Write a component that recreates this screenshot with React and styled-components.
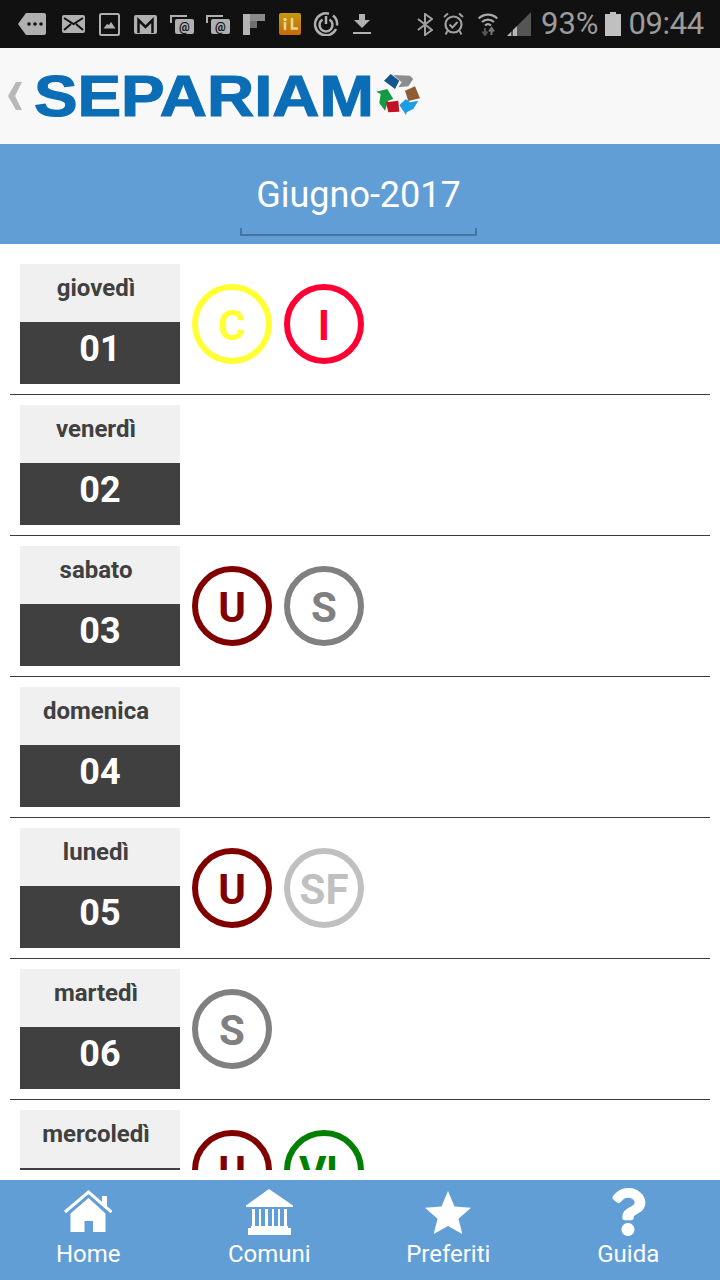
import React from "react";
import styled, { createGlobalStyle } from "styled-components";
import { FaQuestion } from "react-icons/fa";

const Global = createGlobalStyle`
  html, body { margin: 0; padding: 0; background: #fff; }
  body { font-family: Roboto, "Liberation Sans", sans-serif; }
`;

const Page = styled.div`
  width: 720px;
  height: 1280px;
  display: flex;
  flex-direction: column;
  overflow: hidden;
  background: #fff;
`;

const StatusBar = styled.div`
  height: 48px;
  flex: none;
  background: #111;
  display: flex;
  align-items: center;
  color: #9c9c9c;
  font-size: 31px;
  padding-left: 18px;
`;

const StatusIcon = styled.svg`
  flex: none;
  display: block;
  margin-left: ${(p) => p.$ml || 0}px;
`;

const StatusText = styled.span`
  margin-left: ${(p) => p.$ml}px;
  line-height: 48px;
  letter-spacing: ${(p) => p.$ls || 0}px;
`;

const Header = styled.header`
  height: 96px;
  flex: none;
  background: #f8f8f8;
  display: flex;
  align-items: center;
  padding-left: 8px;
`;

const Back = styled.svg`
  flex: none;
  display: block;
`;

const LogoText = styled.span`
  display: block;
  width: 342px;
  flex: none;
  margin-left: 11px;
  font-family: "Liberation Sans", Arial, sans-serif;
  font-weight: 700;
  font-size: 58px;
  line-height: 96px;
  color: #0b6db6;
  -webkit-text-stroke: 1.2px #0b6db6;
  white-space: nowrap;
  transform: scaleX(1.126);
  transform-origin: left center;
`;

const LogoMark = styled.svg`
  flex: none;
  display: block;
`;

const MonthBar = styled.div`
  height: 100px;
  flex: none;
  background: #619ed6;
  display: flex;
  flex-direction: column;
  align-items: center;
  padding: 27px 3px 0 0;
  box-sizing: border-box;
`;

const MonthTitle = styled.div`
  color: #fff;
  font-size: 36px;
  line-height: 48px;
  height: 50px;
`;

const MonthBracket = styled.div`
  width: 237px;
  height: 8px;
  box-sizing: border-box;
  margin-top: 7px;
  border: 2px solid #44749f;
  border-top: 0;
`;

const List = styled.main`
  flex: 1;
  min-height: 0;
  overflow: hidden;
  padding: 10px 10px 0;
  margin-bottom: 10px;
`;

const Row = styled.section`
  display: flex;
  gap: 12px;
  padding: 10px 0 10px 10px;
  border-bottom: 1px solid #3c3c3c;
`;

const DateBox = styled.div`
  width: 160px;
  height: 120px;
  flex: none;
  display: flex;
  flex-direction: column;
`;

const Weekday = styled.div`
  height: 58px;
  background: #f0f0f0;
  color: #404040;
  font-size: 24px;
  font-weight: 700;
  line-height: 48px;
  text-align: center;
  padding-right: 8px;
  box-sizing: border-box;
`;

const DayNumber = styled.div`
  height: 62px;
  background: #404040;
  color: #fff;
  font-size: 36px;
  font-weight: 700;
  line-height: 54px;
  text-align: center;
  box-sizing: border-box;
`;

const Badges = styled.div`
  display: flex;
  gap: 12px;
  margin-top: 20px;
`;

const Badge = styled.div`
  width: 80px;
  height: 80px;
  box-sizing: border-box;
  border-radius: 50%;
  border: 6px solid ${(p) => p.$color};
  color: ${(p) => p.$color};
  font-size: 42px;
  font-weight: 700;
  padding-top: 2px;
  display: flex;
  align-items: center;
  justify-content: center;
`;

const Nav = styled.nav`
  height: 100px;
  flex: none;
  background: #619ed6;
  display: grid;
  grid-template-columns: repeat(4, 1fr);
  padding-right: 2px;
`;

const NavItem = styled.div`
  display: flex;
  flex-direction: column;
  align-items: center;
  color: #fff;
  font-size: 24px;
  padding-top: 8px;
  padding-right: ${(p) => p.$pr || 0}px;
`;

const NavIcon = styled.div`
  height: 48px;
  display: flex;
  align-items: center;
  justify-content: center;
`;

const NavLabel = styled.span`
  line-height: 28px;
  margin-top: 4px;
`;

const grey = "#b0b0b0";
const bg = "#111";

const MsgIcon = () => (
  <StatusIcon width="28" height="22" viewBox="0 0 28 22">
    <path d="M8 0H26a2 2 0 0 1 2 2V20a2 2 0 0 1-2 2H8L0 11Z" fill={grey} />
    <circle cx="11" cy="11" r="1.8" fill={bg} /><circle cx="17" cy="11" r="1.8" fill={bg} /><circle cx="23" cy="11" r="1.8" fill={bg} />
  </StatusIcon>
);
const MailIcon = () => (
  <StatusIcon $ml={16} width="23" height="18" viewBox="0 0 23 18">
    <rect width="23" height="18" rx="2" fill={grey} />
    <path d="M2 3l9.500 6L21 3M2 15l7-6M21 15l-7-6" stroke={bg} strokeWidth="2" fill="none" />
  </StatusIcon>
);
const PicIcon = () => (
  <StatusIcon $ml={14} width="21" height="23" viewBox="0 0 21 23">
    <rect x="1" y="1" width="19" height="21" rx="1.500" fill={bg} stroke={grey} strokeWidth="2" />
    <path d="M4.500 15.500L8 11l2 1 2-3 4.500 6.500Z" fill={grey} />
  </StatusIcon>
);
const GmailIcon = () => (
  <StatusIcon $ml={14} width="23" height="19" viewBox="0 0 23 19">
    <rect width="23" height="19" rx="2" fill={grey} />
    <path d="M4.500 18V5l7 7 7-7v13" stroke={bg} strokeWidth="2.500" fill="none" />
  </StatusIcon>
);
const AtIcon = ({ ml }) => (
  <StatusIcon $ml={ml} width="24" height="20" viewBox="0 0 24 20">
    <path d="M1 9V2h16" stroke={grey} strokeWidth="2" fill="none" />
    <rect x="5" y="5" width="19" height="15" rx="2" fill={grey} />
    <text x="14.500" y="16.500" fontSize="12" fontWeight="700" fontFamily="Roboto, sans-serif" fill={bg} textAnchor="middle">@</text>
  </StatusIcon>
);
const FlipIcon = () => (
  <StatusIcon $ml={13} width="22" height="21" viewBox="0 0 22 21">
    <rect width="7" height="21" fill="#b4b4b4" />
    <rect x="7" width="15" height="7" fill="#8a8a8a" />
    <rect x="7" y="7" width="7" height="7" fill="#6f6f6f" />
  </StatusIcon>
);
const ILIcon = () => (
  <StatusIcon $ml={14} width="22" height="22" viewBox="0 0 22 22">
    <defs>
      <linearGradient id="il" x1="0" y1="0" x2="0" y2="1">
        <stop offset="0" stopColor="#c39a0c" /><stop offset="1" stopColor="#c76a06" />
      </linearGradient>
    </defs>
    <rect width="22" height="22" rx="2" fill="url(#il)" />
    <path d="M6 10v6M13 6v9.500h5" stroke="#e6d49a" strokeWidth="2.600" fill="none" strokeLinecap="round" />
    <circle cx="6" cy="6.500" r="1.700" fill="#e6d49a" />
  </StatusIcon>
);
const PowerIcon = () => (
  <StatusIcon $ml={12} width="26" height="24" viewBox="0 0 26 24">
    <path d="M16 1.700A11 11 0 1 0 23 17" stroke={grey} strokeWidth="2.500" fill="none" />
    <path d="M24 13.500A11 11 0 0 0 20 3.500" stroke={grey} strokeWidth="2.500" fill="none" />
    <path d="M9.500 7.500a6.500 6.500 0 1 0 7 0M13 4v8" stroke={grey} strokeWidth="2.500" fill="none" />
  </StatusIcon>
);
const DownloadIcon = () => (
  <StatusIcon $ml={14} width="18" height="20" viewBox="0 0 18 20">
    <path d="M6 0h6v6h5l-8 8-8-8h5Z" fill={grey} />
    <rect y="18" width="18" height="2" fill={grey} />
  </StatusIcon>
);
const BtIcon = () => (
  <StatusIcon $ml={46} width="16" height="23" viewBox="0 0 16 23">
    <path d="M1 6l14 11-7 5V1l7 5L1 17" stroke="#a0a0a0" strokeWidth="2" fill="none" />
  </StatusIcon>
);
const AlarmIcon = () => (
  <StatusIcon $ml={10} width="21" height="24" viewBox="0 0 21 24">
    <circle cx="10.500" cy="12.500" r="8" stroke="#a0a0a0" strokeWidth="2.200" fill="none" />
    <path d="M6.500 12.500l3 3 5-5.500M1 5l4-3.500M20 5l-4-3.500M4.500 19l-2 3.500M16.500 19l2 3.500" stroke="#a0a0a0" strokeWidth="2" fill="none" />
  </StatusIcon>
);
const WifiIcon = () => (
  <StatusIcon $ml={14} width="20" height="24" viewBox="0 0 20 24">
    <path d="M0.700 6.500A13 13 0 0 1 19.300 6.500M4 10A9 9 0 0 1 16 10M7 13.500A4.500 4.500 0 0 1 13 13.500" stroke="#aaa" strokeWidth="2.200" fill="none" />
    <path d="M7 16v6M4.500 19.500L7 23l2.500-3.500" stroke="#555" strokeWidth="2" fill="none" />
    <path d="M13.500 23v-6M11 19.500L13.500 16 16 19.500" stroke="#777" strokeWidth="2" fill="none" />
  </StatusIcon>
);
const SignalIcon = () => (
  <StatusIcon $ml={9} width="24" height="24" viewBox="0 0 24 24">
    <path d="M24 0V24H0Z" fill="#555" />
    <path d="M0 24L4 20V24ZM6 24V18L10 14V24Z" fill="#b8b8b8" />
  </StatusIcon>
);
const BatteryIcon = () => (
  <StatusIcon $ml={6} width="16" height="24" viewBox="0 0 16 24">
    <path d="M5 0H11V2H16V24H0V2H5Z" fill="#c0c0c0" />
  </StatusIcon>
);

const Recycle = () => (
  <LogoMark width="44" height="44" viewBox="6 7 44 44">
    <path d="M23.300 8L40 8.700 43.300 12 38.300 19.300 28.300 20.300 31.700 15.300Z" fill="#8d8d8d" />
    <path d="M14 13.700L20.700 7 29.300 13.700 25 22Z" fill="#15558e" />
    <path d="M29.300 38L36 32 40 35.300 48.300 33.700 43.300 42 36.700 45.300 36 48Z" fill="#1b9fe2" />
    <path d="M35 23.700L45 19.300 50 31.300 38.300 34Z" fill="#8e5d33" />
    <path d="M6 24.700L17.300 22 23.300 32 18.300 33.700 15 43.700 9.300 36 10.700 27Z" fill="#149a45" />
    <path d="M16 35.300L28.300 33.700 29.300 44.700 18.300 45.300Z" fill="#c21324" />
  </LogoMark>
);

const HomeIcon = () => (
  <svg width="48" height="44" viewBox="0 0 48 44" fill="#fff">
    <path d="M38 6h5v11l-5-4Z" />
    <path d="M1 22L24.500 2 47.500 22" stroke="#fff" strokeWidth="3" fill="none" />
    <path d="M6.500 23.500L24.500 8 41.500 23.500V42H29V31H20.500V42H6.500Z" />
  </svg>
);
const BankIcon = () => (
  <svg width="47" height="46" viewBox="0 0 47 46" fill="#fff">
    <path d="M0 16.500L23 0 47 16.500V18H0Z" />
    <rect x="6" y="20" width="3" height="19" />
    <rect x="13" y="20" width="2" height="19" />
    <rect x="19" y="20" width="3" height="19" />
    <rect x="26" y="20" width="2" height="19" />
    <rect x="32" y="20" width="2" height="19" />
    <rect x="38" y="20" width="3" height="19" />
    <rect x="5" y="37" width="37" height="3" />
    <rect x="2" y="39" width="43" height="7" />
  </svg>
);
const StarIcon = () => (
  <svg width="46" height="43" viewBox="0 0 46 43" fill="#fff">
    <path d="M23 0L29.500 15.500 46 16.800 33.500 27.700 37.300 43 23 35 8.700 43 12.500 27.700 0 16.800 16.500 15.500Z" />
  </svg>
);

const days = [
  { w: "giovedì", n: "01", b: [["C", "#ffff33"], ["I", "#ff0033"]] },
  { w: "venerdì", n: "02", b: [] },
  { w: "sabato", n: "03", b: [["U", "#800000"], ["S", "#808080"]] },
  { w: "domenica", n: "04", b: [] },
  { w: "lunedì", n: "05", b: [["U", "#800000"], ["SF", "#c0c0c0"]] },
  { w: "martedì", n: "06", b: [["S", "#808080"]] },
  { w: "mercoledì", n: "07", b: [["U", "#800000"], ["VL", "#008000"]] },
];

export default function App() {
  return (
    <Page>
      <Global />
      <StatusBar>
        <MsgIcon /><MailIcon /><PicIcon /><GmailIcon />
        <AtIcon ml={13} /><AtIcon ml={12} />
        <FlipIcon /><ILIcon /><PowerIcon /><DownloadIcon />
        <BtIcon /><AlarmIcon /><WifiIcon /><SignalIcon />
        <StatusText $ml={10}>93%</StatusText>
        <BatteryIcon />
        <StatusText $ml={8} $ls={-0.4}>09:44</StatusText>
      </StatusBar>
      <Header>
        <Back width="15" height="28" viewBox="0 0 15 28">
          <path d="M8 0H14L7 14 14 28H8L0 14Z" fill="#b8b8b8" />
        </Back>
        <LogoText>SEPARIAM</LogoText>
        <Recycle />
      </Header>
      <MonthBar>
        <MonthTitle>Giugno-2017</MonthTitle>
        <MonthBracket />
      </MonthBar>
      <List>
        {days.map((d) => (
          <Row key={d.n}>
            <DateBox>
              <Weekday>{d.w}</Weekday>
              <DayNumber>{d.n}</DayNumber>
            </DateBox>
            <Badges>
              {d.b.map(([t, c]) => (
                <Badge key={t} $color={c}>{t}</Badge>
              ))}
            </Badges>
          </Row>
        ))}
      </List>
      <Nav>
        <NavItem $pr={3}><NavIcon><HomeIcon /></NavIcon><NavLabel>Home</NavLabel></NavItem>
        <NavItem><NavIcon><BankIcon /></NavIcon><NavLabel>Comuni</NavLabel></NavItem>
        <NavItem $pr={1}><NavIcon><StarIcon /></NavIcon><NavLabel>Preferiti</NavLabel></NavItem>
        <NavItem><NavIcon><FaQuestion size={48} /></NavIcon><NavLabel>Guida</NavLabel></NavItem>
      </Nav>
    </Page>
  );
}
